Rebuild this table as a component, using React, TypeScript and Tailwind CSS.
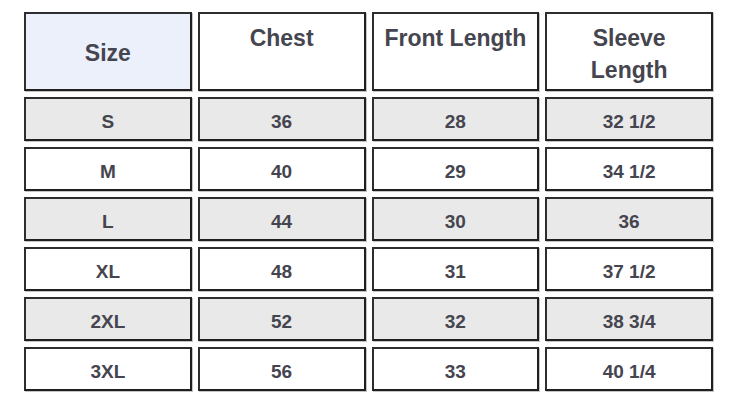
const headers = ["Chest", "Front Length"];

const rows: Array<[string, string, string, string]> = [
  ["S", "36", "28", "32 1/2"],
  ["M", "40", "29", "34 1/2"],
  ["L", "44", "30", "36"],
  ["XL", "48", "31", "37 1/2"],
  ["2XL", "52", "32", "38 3/4"],
  ["3XL", "56", "33", "40 1/4"],
];

const cellBox =
  "border-2 border-t-[#2e2e2e] border-l-[#2e2e2e] border-r-[#1f1f1f] border-b-[#1f1f1f] shadow-[1px_1px_0_#c4c4c4]";

export default function App() {
  return (
    <div
      className="w-[750px] h-[409px] bg-white pt-[12px] pl-[24px] text-[#45454f]"
      style={{ fontFamily: '"Liberation Sans", Arial, sans-serif' }}
    >
      <div className="grid w-[689px] grid-cols-4 gap-x-[6px] gap-y-[6px]">
        <div
          className={`${cellBox} flex h-[79px] items-center justify-center bg-[#ebf0fb] pt-[3px] text-[23px] font-bold leading-[32px]`}
        >
          Size
        </div>
        {headers.map((h) => (
          <div
            key={h}
            className={`${cellBox} h-[79px] bg-white pt-[8px] text-center text-[23px] font-bold leading-[32px]`}
          >
            {h}
          </div>
        ))}
        <div
          className={`${cellBox} h-[79px] bg-white pt-[8px] text-center text-[23px] font-bold leading-[32px]`}
        >
          Sleeve
          <br />
          Length
        </div>

        {rows.map((row, i) =>
          row.map((v, j) => (
            <div
              key={`${i}-${j}`}
              className={`${cellBox} h-[44px] pt-[12px] text-center text-[19px] font-bold leading-[22px] ${
                i % 2 === 0 ? "bg-[#e9e9e9]" : "bg-white"
              }`}
            >
              {v}
            </div>
          ))
        )}
      </div>
    </div>
  );
}
